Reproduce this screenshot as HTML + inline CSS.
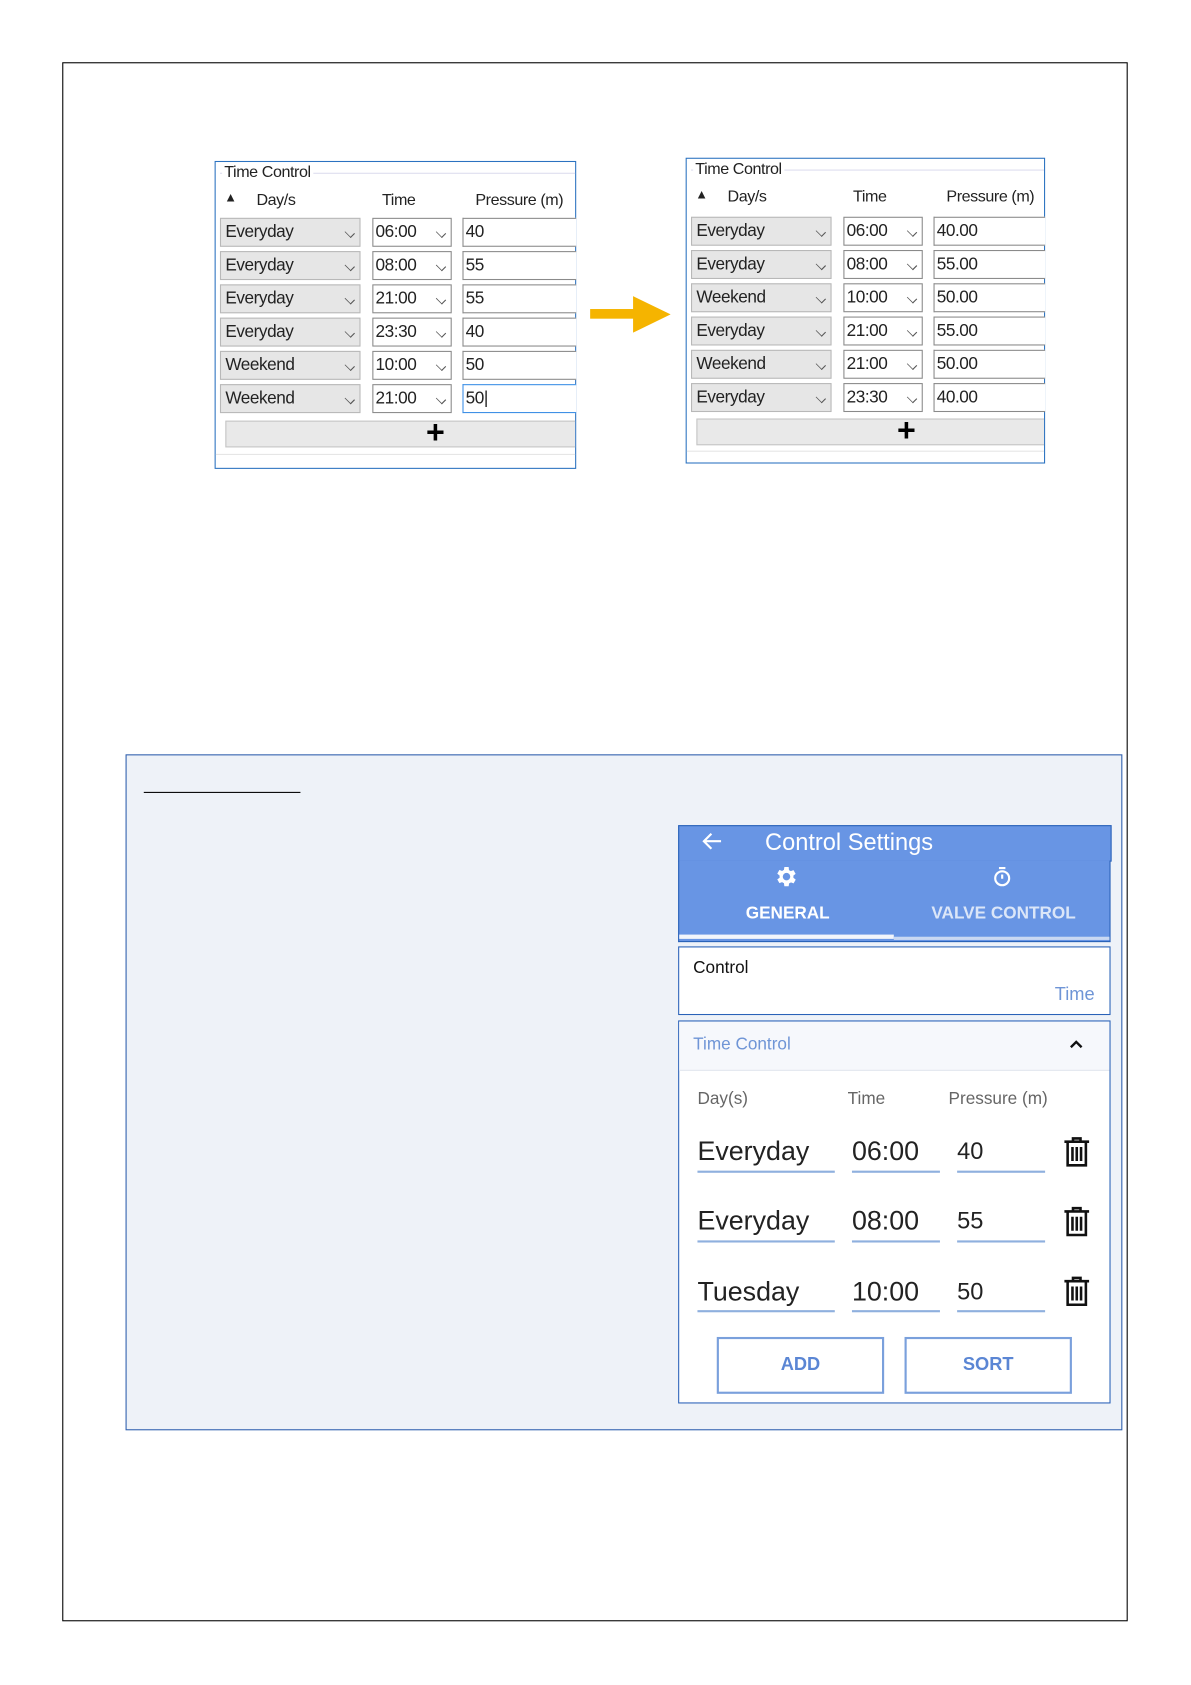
<!DOCTYPE html>
<html><head><meta charset="utf-8"><style>
*{box-sizing:border-box;margin:0;padding:0}
html,body{width:1191px;height:1684px;background:#fff;overflow:hidden}
#w{position:absolute;left:0;top:0;width:1110px;height:1570px;transform:scale(1.073);transform-origin:0 0;font-family:"Liberation Sans",sans-serif}
.a{position:absolute}
.dd{position:absolute;height:27px;background:#e6e6e6;border:1px solid #b8b8b8;font-size:16px;letter-spacing:-0.4px;line-height:25px;padding-left:4px;color:#222}
.tb{position:absolute;height:27px;background:#fff;border:1px solid #8a8a8a;font-size:16px;letter-spacing:-0.4px;line-height:25px;padding-left:2px;color:#222}
.chev{position:absolute;right:5px;top:9px;width:8px;height:8px;border-right:1.3px solid #555;border-bottom:1.3px solid #555;transform:rotate(45deg) scale(1,0.7)}
.hd{position:absolute;font-size:15px;letter-spacing:-0.4px;color:#222}
.ul{position:absolute;height:2px;background:#8fb0de}
.big{position:absolute;font-size:25px;color:#222}
.btn{position:absolute;border:2px solid #7aa0dc;color:#5b86d4;font-size:17px;font-weight:bold;text-align:center;line-height:48px;background:#fff}
.plus{position:absolute;left:9px;width:330px;height:25px;background:#e9e9e9;border:1px solid #c4c4c4}
.plus b{position:absolute;left:186px;top:-4px;font-size:30px;line-height:30px}
</style></head><body><div id="w">
<div class="a" style="left:58px;top:58px;width:993px;height:1453px;border:1px solid #000"></div>

<div class="a" style="left:200px;top:150px;width:337px;height:287px;border:1.5px solid #2b72c0;background:#fff;overflow:hidden">
 <div class="a" style="left:4px;top:10px;width:340px;height:1px;background:#dde"></div>
 <div class="a" style="left:6px;top:1px;background:#fff;padding:0 2px;font-size:15px;letter-spacing:-0.4px;color:#222">Time Control</div>
 <div class="hd" style="left:8px;top:26px;font-size:12px">▲</div>
 <div class="hd" style="left:38px;top:27px">Day/s</div>
 <div class="hd" style="left:155px;top:27px">Time</div>
 <div class="hd" style="left:242px;top:27px">Pressure (m)</div>
 <div class="plus" style="top:241px"><b>+</b></div>
 <div class="a" style="left:0;top:272px;width:340px;height:1px;background:#e5e5e5"></div>
</div>
<div class="a" style="left:639px;top:147px;width:335px;height:285px;border:1.5px solid #2b72c0;background:#fff;overflow:hidden">
 <div class="a" style="left:4px;top:10px;width:340px;height:1px;background:#dde"></div>
 <div class="a" style="left:6px;top:1px;background:#fff;padding:0 2px;font-size:15px;letter-spacing:-0.4px;color:#222">Time Control</div>
 <div class="hd" style="left:8px;top:26px;font-size:12px">▲</div>
 <div class="hd" style="left:38px;top:27px">Day/s</div>
 <div class="hd" style="left:155px;top:27px">Time</div>
 <div class="hd" style="left:242px;top:27px">Pressure (m)</div>
 <div class="plus" style="top:242px"><b>+</b></div>
 <div class="a" style="left:0;top:272px;width:340px;height:1px;background:#e5e5e5"></div>
</div>

<div class="dd" style="left:205px;top:203px;width:131px">Everyday<i class="chev"></i></div>
<div class="tb" style="left:347px;top:203px;width:74px">06:00<i class="chev"></i></div>
<div class="tb" style="left:431px;top:203px;width:106px;border-right:none">40</div>
<div class="dd" style="left:205px;top:234px;width:131px">Everyday<i class="chev"></i></div>
<div class="tb" style="left:347px;top:234px;width:74px">08:00<i class="chev"></i></div>
<div class="tb" style="left:431px;top:234px;width:106px;border-right:none">55</div>
<div class="dd" style="left:205px;top:265px;width:131px">Everyday<i class="chev"></i></div>
<div class="tb" style="left:347px;top:265px;width:74px">21:00<i class="chev"></i></div>
<div class="tb" style="left:431px;top:265px;width:106px;border-right:none">55</div>
<div class="dd" style="left:205px;top:296px;width:131px">Everyday<i class="chev"></i></div>
<div class="tb" style="left:347px;top:296px;width:74px">23:30<i class="chev"></i></div>
<div class="tb" style="left:431px;top:296px;width:106px;border-right:none">40</div>
<div class="dd" style="left:205px;top:327px;width:131px">Weekend<i class="chev"></i></div>
<div class="tb" style="left:347px;top:327px;width:74px">10:00<i class="chev"></i></div>
<div class="tb" style="left:431px;top:327px;width:106px;border-right:none">50</div>
<div class="dd" style="left:205px;top:358px;width:131px">Weekend<i class="chev"></i></div>
<div class="tb" style="left:347px;top:358px;width:74px">21:00<i class="chev"></i></div>
<div class="tb" style="left:431px;top:358px;width:106px;border:1px solid #3a8ee6;border-right:none">50|</div>

<div class="dd" style="left:644px;top:202px;width:131px">Everyday<i class="chev"></i></div>
<div class="tb" style="left:786px;top:202px;width:74px">06:00<i class="chev"></i></div>
<div class="tb" style="left:870px;top:202px;width:104px;border-right:none">40.00</div>
<div class="dd" style="left:644px;top:233px;width:131px">Everyday<i class="chev"></i></div>
<div class="tb" style="left:786px;top:233px;width:74px">08:00<i class="chev"></i></div>
<div class="tb" style="left:870px;top:233px;width:104px;border-right:none">55.00</div>
<div class="dd" style="left:644px;top:264px;width:131px">Weekend<i class="chev"></i></div>
<div class="tb" style="left:786px;top:264px;width:74px">10:00<i class="chev"></i></div>
<div class="tb" style="left:870px;top:264px;width:104px;border-right:none">50.00</div>
<div class="dd" style="left:644px;top:295px;width:131px">Everyday<i class="chev"></i></div>
<div class="tb" style="left:786px;top:295px;width:74px">21:00<i class="chev"></i></div>
<div class="tb" style="left:870px;top:295px;width:104px;border-right:none">55.00</div>
<div class="dd" style="left:644px;top:326px;width:131px">Weekend<i class="chev"></i></div>
<div class="tb" style="left:786px;top:326px;width:74px">21:00<i class="chev"></i></div>
<div class="tb" style="left:870px;top:326px;width:104px;border-right:none">50.00</div>
<div class="dd" style="left:644px;top:357px;width:131px">Everyday<i class="chev"></i></div>
<div class="tb" style="left:786px;top:357px;width:74px">23:30<i class="chev"></i></div>
<div class="tb" style="left:870px;top:357px;width:104px;border-right:none">40.00</div>

<svg class="a" style="left:548px;top:274px" width="80" height="38"><rect x="2" y="14" width="46" height="9" fill="#f5b400"/><polygon points="42,2 77,19 42,36" fill="#f5b400"/></svg>

<div class="a" style="left:117px;top:703px;width:929px;height:630px;border:1.5px solid #2f5fae;background:#eef2f8"></div>
<div class="a" style="left:134px;top:738px;width:146px;height:1px;background:#000"></div>

<div class="a" style="left:632px;top:769px;width:404px;height:34px;background:#6895e4;border:1.5px solid #2a62b8"></div>
<svg class="a" style="left:652px;top:774px" width="24" height="22"><path d="M20 10H4M11 3L4 10L11 17" stroke="#fff" stroke-width="2" fill="none"/></svg>
<div class="a" style="left:713px;top:772px;font-size:22px;color:#fff">Control Settings</div>
<div class="a" style="left:632px;top:802px;width:403px;height:76px;background:#6895e4;border:1.5px solid #2a62b8;border-top:none"></div>
<div class="a" style="left:633px;top:871px;width:200px;height:4px;background:#f2f5fb"></div>
<div class="a" style="left:833px;top:873px;width:201px;height:3px;background:#c9d8f2"></div>
<svg class="a" style="left:721px;top:805px" width="24" height="24" viewBox="0 0 24 24"><path fill="#fff" d="M19.4 13a7.5 7.5 0 0 0 0-2l2.1-1.6-2-3.5-2.5 1a7 7 0 0 0-1.7-1L15 3h-4l-.4 2.7a7 7 0 0 0-1.7 1l-2.5-1-2 3.5L6.6 11a7.5 7.5 0 0 0 0 2l-2.2 1.6 2 3.5 2.5-1c.5.4 1.1.7 1.7 1L11 21h4l.4-2.7c.6-.3 1.2-.6 1.7-1l2.5 1 2-3.5zM13 15.5a3.5 3.5 0 1 1 0-7 3.5 3.5 0 0 1 0 7z" transform="translate(-1 0)"/></svg>
<svg class="a" style="left:924px;top:806px" width="20" height="22" viewBox="0 0 20 22"><circle cx="10" cy="12.5" r="6.5" stroke="#fff" stroke-width="2" fill="none"/><path d="M7 3h6M10 9v4" stroke="#fff" stroke-width="2"/></svg>
<div class="a" style="left:695px;top:843px;font-size:16px;font-weight:bold;color:#fff">GENERAL</div>
<div class="a" style="left:868px;top:843px;font-size:16px;font-weight:bold;color:#dbe6f8">VALVE CONTROL</div>

<div class="a" style="left:632px;top:882px;width:403px;height:64px;background:#fff;border:1.5px solid #2a62b8"></div>
<div class="a" style="left:646px;top:894px;font-size:16px;color:#111">Control</div>
<div class="a" style="left:983px;top:917px;font-size:17px;color:#6f95d6">Time</div>

<div class="a" style="left:632px;top:951px;width:403px;height:357px;background:#fff;border:1.5px solid #2a62b8"></div>
<div class="a" style="left:633px;top:952px;width:401px;height:46px;background:#f6f8fc;border-bottom:1px solid #e2e6ee"></div>
<div class="a" style="left:646px;top:965px;font-size:16px;color:#6f95d6">Time Control</div>
<svg class="a" style="left:996px;top:967px" width="14" height="12"><path d="M2 9L7 4L12 9" stroke="#111" stroke-width="2.2" fill="none"/></svg>

<div class="a" style="left:650px;top:1016px;font-size:16px;color:#666">Day(s)</div>
<div class="a" style="left:790px;top:1016px;font-size:16px;color:#666">Time</div>
<div class="a" style="left:884px;top:1016px;font-size:16px;color:#666">Pressure (m)</div>

<div class="big" style="left:650px;top:1059px">Everyday</div>
<div class="big" style="left:794px;top:1059px">06:00</div>
<div class="big" style="left:892px;top:1060px;font-size:22px">40</div>
<div class="ul" style="left:650px;top:1091px;width:128px"></div>
<div class="ul" style="left:794px;top:1091px;width:82px"></div>
<div class="ul" style="left:892px;top:1091px;width:82px"></div>

<div class="big" style="left:650px;top:1124px">Everyday</div>
<div class="big" style="left:794px;top:1124px">08:00</div>
<div class="big" style="left:892px;top:1125px;font-size:22px">55</div>
<div class="ul" style="left:650px;top:1156px;width:128px"></div>
<div class="ul" style="left:794px;top:1156px;width:82px"></div>
<div class="ul" style="left:892px;top:1156px;width:82px"></div>

<div class="big" style="left:650px;top:1190px">Tuesday</div>
<div class="big" style="left:794px;top:1190px">10:00</div>
<div class="big" style="left:892px;top:1191px;font-size:22px">50</div>
<div class="ul" style="left:650px;top:1221px;width:128px"></div>
<div class="ul" style="left:794px;top:1221px;width:82px"></div>
<div class="ul" style="left:892px;top:1221px;width:82px"></div>

<svg class="a" style="left:990px;top:1059px" width="27" height="30" viewBox="0 0 27 30"><path d="M10 4V2h7v2M2 5h23M5 6v21h17V6M9.5 10v13M13.5 10v13M17.5 10v13" stroke="#111" stroke-width="2.4" fill="none"/></svg>
<svg class="a" style="left:990px;top:1124px" width="27" height="30" viewBox="0 0 27 30"><path d="M10 4V2h7v2M2 5h23M5 6v21h17V6M9.5 10v13M13.5 10v13M17.5 10v13" stroke="#111" stroke-width="2.4" fill="none"/></svg>
<svg class="a" style="left:990px;top:1189px" width="27" height="30" viewBox="0 0 27 30"><path d="M10 4V2h7v2M2 5h23M5 6v21h17V6M9.5 10v13M13.5 10v13M17.5 10v13" stroke="#111" stroke-width="2.4" fill="none"/></svg>

<div class="btn" style="left:668px;top:1246px;width:156px;height:53px">ADD</div>
<div class="btn" style="left:843px;top:1246px;width:156px;height:53px">SORT</div>
</div></body></html>
